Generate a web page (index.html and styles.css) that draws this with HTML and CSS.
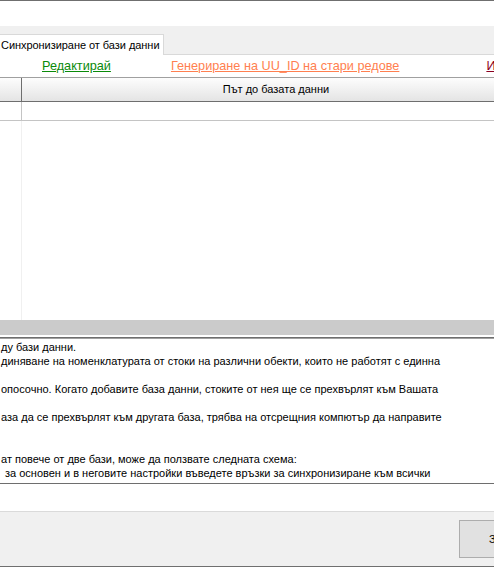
FILE: index.html
```html
<!DOCTYPE html>
<html lang="bg">
<head>
<meta charset="utf-8">
<title>Синхронизиране от бази данни</title>
<link rel="stylesheet" href="styles.css">
</head>
<body>
<div class="window">
  <div class="topline"></div>
  <div class="topspace"></div>
  <div class="tabstrip">
    <div class="tab">Синхронизиране от бази данни</div>
  </div>
  <div class="links">
    <a class="link edit">Редактирай</a>
    <a class="link gen">Генериране на UU_ID на стари редове</a>
    <a class="link del">Изтрий</a>
  </div>
  <div class="grid">
    <div class="grid-head">
      <div class="rowhead"></div>
      <div class="colhead">Път до базата данни</div>
    </div>
    <div class="grid-row">
      <div class="rowhead"></div>
      <div class="cell"></div>
    </div>
    <div class="grid-body">
      <div class="rowhead faint"></div>
      <div class="cell"></div>
    </div>
  </div>
  <div class="splitter"></div>
  <div class="gap"></div>
  <div class="textbox">
    <div class="ln">ду бази данни.</div>
    <div class="ln">диняване на номенклатурата от стоки на различни обекти, които не работят с единна</div>
    <div class="ln"></div>
    <div class="ln">опосочно. Когато добавите база данни, стоките от нея ще се прехвърлят към Вашата</div>
    <div class="ln"></div>
    <div class="ln">аза да се прехвърлят към другата база, трябва на отсрещния компютър да направите</div>
    <div class="ln"></div>
    <div class="ln"></div>
    <div class="ln">ат повече от две бази, може да ползвате следната схема:</div>
    <div class="ln indent">за основен и в неговите настройки въведете връзки за синхронизиране към всички</div>
  </div>
  <div class="whitespace"></div>
  <div class="footer">
    <button class="btn">Затвори</button>
  </div>
  <div class="bottomline"></div>
</div>
</body>
</html>
```
FILE: styles.css
```css
html, body {
  margin: 0;
  padding: 0;
  background: #ffffff;
}
body {
  width: 494px;
  height: 567px;
  overflow: hidden;
  font-family: "Liberation Sans", Arial, sans-serif;
  font-size: 11px;
  color: #000;
}
.window {
  width: 494px;
  height: 567px;
  overflow: hidden;
  display: flex;
  flex-direction: column;
}
.topline {
  height: 1px;
  background: #6f6f6f;
  flex: none;
}
.topspace {
  height: 25px;
  flex: none;
}
.tabstrip {
  height: 28px;
  flex: none;
  background: #f0f0f0;
  border-bottom: 1px solid #d9d9d9;
  display: flex;
  align-items: flex-end;
}
.tab {
  height: 20px;
  margin-bottom: -1px;
  background: #fff;
  border-top: 1px solid #d9d9d9;
  border-right: 1px solid #d9d9d9;
  padding: 0 4px 0 1px;
  line-height: 20px;
  font-size: 11px;
  letter-spacing: -0.05px;
}
.links {
  height: 22px;
  flex: none;
  display: flex;
  align-items: center;
  font-size: 12.7px;
}
.link {
  text-decoration: underline;
  white-space: nowrap;
}
.edit {
  color: #0a8a0a;
  margin-left: 42px;
}
.gen {
  color: #ff7f50;
  margin-left: 60px;
}
.del {
  color: #8b0020;
  margin-left: 87px;
}
.grid {
  flex: none;
  border-top: 1px solid #a0a0a0;
  height: 242px;
  display: flex;
  flex-direction: column;
}
.grid-head {
  height: 23px;
  flex: none;
  display: flex;
  background: linear-gradient(#fdfdfd, #e4e4e4);
  border-bottom: 1px solid #6e6e6e;
}
.grid-head .rowhead {
  width: 21px;
  flex: none;
  border-right: 1px solid #6e6e6e;
}
.colhead {
  flex: none;
  width: 508px;
  text-align: center;
  line-height: 23px;
}
.grid-row {
  height: 18px;
  flex: none;
  display: flex;
  border-bottom: 1px solid #c4c4c4;
}
.rowhead {
  width: 21px;
  flex: none;
  border-right: 1px solid #c4c4c4;
}
.rowhead.faint {
  border-right-color: #f0f0f0;
}
.cell {
  flex: 1;
}
.grid-body {
  flex: 1;
  display: flex;
}
.splitter {
  height: 15px;
  flex: none;
  background: #cbcbcb;
}
.gap {
  height: 2px;
  flex: none;
}
.textbox {
  flex: none;
  border-top: 1px solid #6e6e6e;
  box-shadow: inset 0 1px 0 #a0a0a0;
  border-bottom: 1px solid #6e6e6e;
  padding-top: 2px;
  box-sizing: border-box;
  height: 147px;
}
.ln {
  height: 14px;
  line-height: 14px;
  white-space: nowrap;
  padding-left: 1px;
}
.ln.indent {
  padding-left: 5px;
}
.whitespace {
  height: 27px;
  flex: none;
  border-bottom: 1px solid #dadada;
}
.footer {
  flex: 1;
  background: #f0f0f0;
  display: flex;
  align-items: flex-start;
  padding-top: 8px;
  padding-left: 459px;
}
.btn {
  flex: none;
  width: 90px;
  height: 38px;
  border: 1px solid #adadad;
  background: #e1e1e1;
  font-family: "Liberation Sans", Arial, sans-serif;
  font-size: 11px;
  text-align: left;
  padding: 0 0 0 29px;
  margin: 0;
  color: #000;
}
.bottomline {
  height: 1px;
  flex: none;
  background: #6f6f6f;
}
```
